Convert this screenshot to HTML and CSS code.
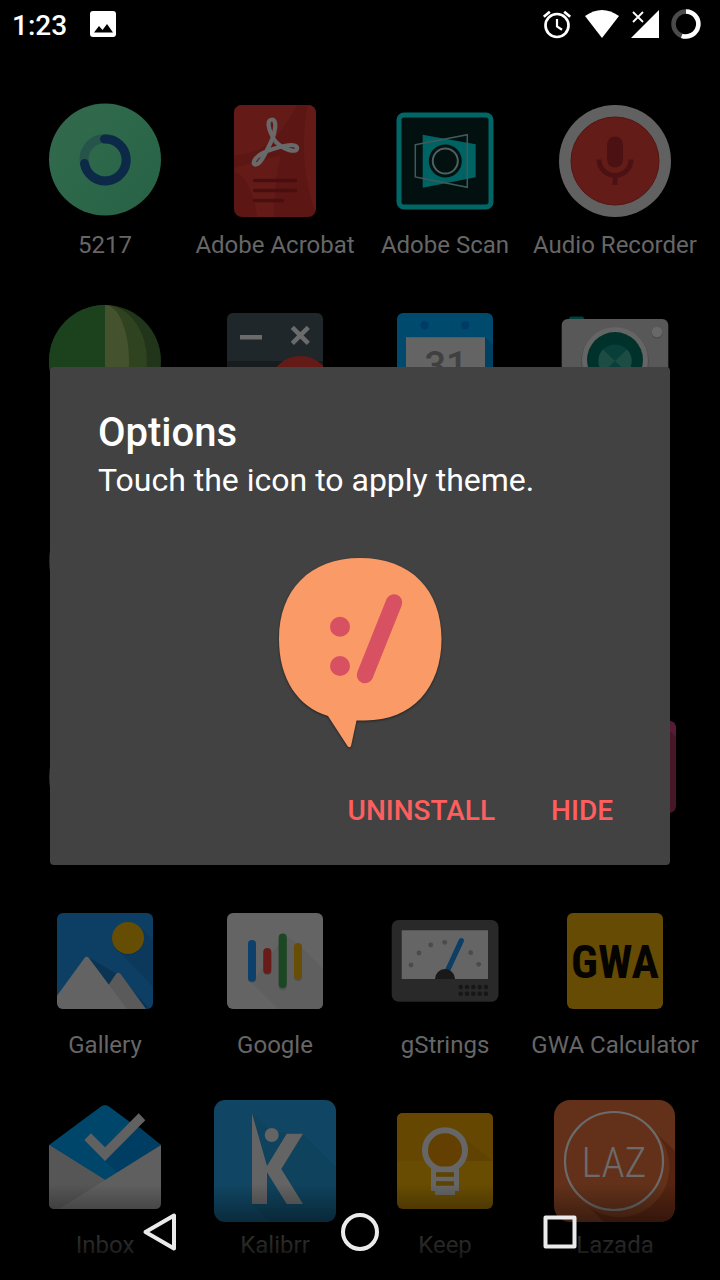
FILE: index.html
```html
<!DOCTYPE html>
<html lang="en">
<head>
<meta charset="utf-8">
<meta name="viewport" content="width=device-width, initial-scale=1">
<title>App drawer</title>
<link rel="stylesheet" href="styles.css">
</head>
<body>
<div class="screen">
  <header class="status">
    <span class="clock">1:23</span>
    <svg class="notice" width="26" height="26" viewBox="0 0 26 26"><rect width="26" height="26" rx="3" fill="#fff"/><path d="M4 21.500l5-6.500 3.500 4 4.500-6 6 8.500z" fill="#000"/></svg>
    <div class="status-icons">
      <svg width="32" height="32" viewBox="0 0 32 32" fill="none" stroke="#fff" stroke-width="2.700"><circle cx="16" cy="17.500" r="11.500"/><path d="M16 11v7.500l5 3.200" stroke-width="2.200"/><path d="M2.800 8.700l6-5M29.200 8.700l-6-5"/></svg>
      <svg width="34" height="30" viewBox="0 0 34 30"><path d="M17 29L0 7Q17-5 34 7z" fill="#fff"/></svg>
      <svg width="28" height="32" viewBox="0 0 28 32"><path d="M28 2v28H0z" fill="#fff"/><path d="M0 1h15v13L7 21 0 16z" fill="#000"/><path d="M2 4l10 10M12 4L2 14" stroke="#fff" stroke-width="1.800"/></svg>
      <svg width="30" height="30" viewBox="0 0 30 30" fill="none" stroke-width="4.500"><circle cx="15" cy="15" r="12.500" stroke="#4a4a4a"/><path d="M15 2.500a12.500 12.500 0 1 1-4.300 24.300" stroke="#fff"/></svg>
    </div>
  </header>

  <main class="apps">
    <div class="app">
      <svg class="icon" viewBox="0 0 128 128"><defs><linearGradient id="mint" x1="0" y1="0" x2="1" y2="1"><stop offset="0" stop-color="#34694c"/><stop offset=".45" stop-color="#2d684b"/><stop offset="1" stop-color="#286145"/></linearGradient></defs><circle cx="64" cy="62.500" r="56" fill="url(#mint)"/><circle cx="64" cy="62.500" r="21" fill="none" stroke="#26544a" stroke-width="9"/><path d="M63.500 42A21 21 0 1 1 43.500 66.500" fill="none" stroke="#0c2a47" stroke-width="9" stroke-linecap="round"/></svg>
      <span class="name">5217</span>
    </div>
    <div class="app">
      <svg class="icon" viewBox="0 0 128 128"><defs><clipPath id="pdf"><rect x="23" y="8" width="82" height="112" rx="8"/></clipPath></defs><g clip-path="url(#pdf)"><path d="M23 8h82v112H23z" fill="#5c1614"/><path d="M23 8h63C80 20 74 28 68 36 57 50 40 58 23 58zM23 74c14 8 20 22 23 46h17c0-20 2-42 7-62L23 71z" fill="#641b18"/><path d="M97 8c-7 32-5 70 6 104h3V8z" fill="#641b18"/></g><path d="M64 44C56 31 56 22.500 61 22.500S65 35 60 45 50 67 45 67.500 42 58 62 52s25-4 24 0-14 1-22-8" fill="none" stroke="#696969" stroke-width="4.200" stroke-linejoin="round"/><path d="M43.500 83.500h41M43.500 93.500h41M43.500 103.500h28" stroke="#470f0e" stroke-width="3.400" stroke-linecap="round"/></svg>
      <span class="name">Adobe Acrobat</span>
    </div>
    <div class="app">
      <svg class="icon" viewBox="0 0 128 128"><rect x="18" y="18" width="92" height="92" rx="5" fill="#021010" stroke="#006666" stroke-width="5"/><path d="M41.700 37.700l53 9.600v33l-53 10.400z" fill="#006363"/><circle cx="64.300" cy="64" r="16.500" fill="#021010"/><circle cx="64.300" cy="64" r="12.500" fill="none" stroke="#4c6261" stroke-width="2"/><path d="M34.300 47.700l52-10v52.600L34.300 80z" fill="none" stroke="#405a59" stroke-width="1.500"/></svg>
      <span class="name">Adobe Scan</span>
    </div>
    <div class="app">
      <svg class="icon" viewBox="0 0 128 128"><circle cx="64" cy="64" r="56" fill="#616161"/><circle cx="64" cy="64" r="44" fill="#641c19" stroke="#541512" stroke-width="1"/><rect x="56" y="39.500" width="16" height="31" rx="8" fill="#4c1112"/><path d="M48 62.500a16 16 0 0 0 32 0M64 78.500V88" fill="none" stroke="#4c1112" stroke-width="5"/></svg>
      <span class="name">Audio Recorder</span>
    </div>

    <div class="app">
      <svg class="icon" viewBox="0 0 128 128"><circle cx="64" cy="64" r="56" fill="#20351a"/><ellipse cx="64" cy="64" rx="42" ry="56" fill="#304320"/><ellipse cx="64" cy="64" rx="24" ry="56" fill="#44532d"/><path d="M64 8a56 56 0 0 0 0 112z" fill="#1b421d"/></svg>
    </div>
    <div class="app">
      <svg class="icon" viewBox="0 0 128 128"><defs><clipPath id="calc"><rect x="16" y="16" width="96" height="96" rx="6"/></clipPath></defs><g clip-path="url(#calc)"><path d="M16 16h96v48H16z" fill="#1f272b"/><path d="M16 64h96v48H16z" fill="#171c1f"/><circle cx="89.300" cy="90" r="31" fill="#641b18"/></g><path d="M29 40.300h22M81.300 30.300l16 16M97.300 30.300l-16 16" stroke="#6b6b6b" stroke-width="4.500"/></svg>
    </div>
    <div class="app">
      <svg class="icon" viewBox="0 0 128 128"><rect x="16" y="16" width="96" height="96" rx="6" fill="#004a6e"/><circle cx="43.700" cy="28.300" r="4" fill="#003a66"/><circle cx="84.300" cy="28.300" r="4" fill="#003a66"/><path d="M104 40l8 8v64h-8z" fill="#004063"/><path d="M25 40.300h79V112H25z" fill="#646464"/><text class="date" x="65" y="82" text-anchor="middle">31</text></svg>
    </div>
    <div class="app">
      <svg class="icon" viewBox="0 0 128 128"><rect x="18" y="19.500" width="15" height="12" rx="2" fill="#01403a"/><rect x="10.700" y="22" width="106.600" height="90" rx="6" fill="#585858"/><circle cx="64" cy="64.500" r="34" fill="#4d4d4d"/><circle cx="64" cy="63" r="33" fill="#656565"/><circle cx="64" cy="63" r="28" fill="#01312b"/><circle cx="64" cy="64" r="16.500" fill="#083f39"/><path d="M64 64L52 52.500a16.500 16.500 0 0 0 0 23zM64 64l12-11.500a16.500 16.500 0 0 1 0 23z" fill="#1d4c45"/><circle cx="106" cy="36" r="5.500" fill="#4b4b4b"/><circle cx="106" cy="35" r="5.300" fill="#686868"/></svg>
    </div>

    <div class="app">
      <svg class="icon" viewBox="0 0 128 128"><circle cx="64" cy="64" r="56" fill="#153a2b"/></svg>
    </div>
    <div class="app"></div>
    <div class="app"></div>
    <div class="app"></div>

    <div class="app">
      <svg class="icon" viewBox="0 0 128 128"><circle cx="64" cy="80" r="56" fill="#1c3f24"/></svg>
    </div>
    <div class="app"></div>
    <div class="app"></div>
    <div class="app">
      <svg class="icon" viewBox="0 0 128 128"><rect x="4" y="24" width="121" height="92" rx="7" fill="#471627"/><path d="M11 24h107q7 0 7 7v9l-10-10z" fill="#571c35"/></svg>
    </div>

    <div class="app">
      <svg class="icon" viewBox="0 0 128 128"><defs><clipPath id="gal"><rect x="16" y="16" width="96" height="96" rx="6"/></clipPath></defs><g clip-path="url(#gal)"><path d="M16 16h96v96H16z" fill="#0d3f65"/><path d="M99 30l13 12v48L76 52z" fill="#0c385b"/><circle cx="87" cy="42" r="16" fill="#0b3353"/><circle cx="87" cy="41" r="16" fill="#664d04"/><path d="M47 60l29 17 33 35H60z" fill="#0b3453"/><path d="M60 99l15-22q2.300-2.500 4.600 0L105 112H70z" fill="#5a5a5a"/><path d="M15 100l28.500-39q2.200-2.500 4.400 0L86 112H15z" fill="#636363"/></g></svg>
      <span class="name">Gallery</span>
    </div>
    <div class="app">
      <svg class="icon" viewBox="0 0 128 128"><rect x="16" y="16" width="96" height="96" rx="6" fill="#646464"/><path d="M41 86l26 26h39q6 0 6-6V72L88 48 74 38z" fill="#5f5f5f"/><g stroke-width="8" stroke-linecap="round"><path d="M41 47.500v34M56.300 56v18M71.700 42v47M87 51v29" stroke="#515151"/><path d="M41 47v33.700" stroke="#0d406b"/><path d="M56.300 55v18" stroke="#681c19"/><path d="M71.700 40.500v46.500" stroke="#1b4823"/><path d="M87 50v28" stroke="#684e04"/></g></svg>
      <span class="name">Google</span>
    </div>
    <div class="app">
      <svg class="icon" viewBox="0 0 128 128"><rect x="10.700" y="23" width="106.800" height="81.700" rx="7" fill="#292929"/><path d="M20.700 33.300H107V82H20.700z" fill="#656565"/><g fill="#4b4b4b"><circle cx="30" cy="68" r="2.400"/><circle cx="38" cy="56" r="2.400"/><circle cx="49.700" cy="48" r="2.400"/><circle cx="63.700" cy="45.300" r="2.400"/><circle cx="89.700" cy="55.700" r="2.400"/><circle cx="97.700" cy="67.300" r="2.400"/></g><path d="M80.300 43.700L64 79" stroke="#0d3f66" stroke-width="5.300" stroke-linecap="round"/><path d="M54 82a10 10 0 0 1 20 0z" fill="#191919"/><g fill="#171717"><circle cx="79.700" cy="90" r="2.300"/><circle cx="86" cy="90" r="2.300"/><circle cx="92.300" cy="90" r="2.300"/><circle cx="98.700" cy="90" r="2.300"/><circle cx="105" cy="90" r="2.300"/><circle cx="79.700" cy="96.700" r="2.300"/><circle cx="86" cy="96.700" r="2.300"/><circle cx="92.300" cy="96.700" r="2.300"/><circle cx="98.700" cy="96.700" r="2.300"/><circle cx="105" cy="96.700" r="2.300"/></g></svg>
      <span class="name">gStrings</span>
    </div>
    <div class="app">
      <svg class="icon" viewBox="0 0 128 128"><rect x="16" y="16" width="96" height="96" rx="6" fill="#664b04"/><text class="gwa" x="64" y="81" text-anchor="middle">GWA</text></svg>
      <span class="name">GWA Calculator</span>
    </div>

    <div class="app">
      <svg class="icon" viewBox="0 0 128 128"><path d="M8 48l52-38.500q4-3 8 0L120 48 64 86z" fill="#00456a"/><path d="M64 64l34-34 22 18-43 28z" fill="#003d62"/><path d="M8 48l56 35 56-35v58q0 6-6 6H14q-6 0-6-6z" fill="#5f5f5f"/><path d="M8 48l56 35-46 29h-4q-6 0-6-6z" fill="#565656"/><path d="M43.300 43l6.700-6.700 14 14 33.700-34 6.600 7L64 64z" fill="#616161"/></svg>
      <span class="name">Inbox</span>
    </div>
    <div class="app">
      <svg class="icon" viewBox="0 0 128 128"><rect x="3" y="3" width="122" height="122" rx="11" fill="#104663"/><path d="M41 16l19 19 32 2 33 33v44q0 11-11 11H59L41 107z" fill="#0f425d"/><path d="M41 16.300L56 69l19.700-32.300H92L70.300 72 92 107H75.700L56 75.300V107H41z" fill="#646464"/><circle cx="60.700" cy="38" r="7" fill="#646464"/></svg>
      <span class="name">Kalibrr</span>
    </div>
    <div class="app">
      <svg class="icon" viewBox="0 0 128 128"><rect x="16" y="16" width="96" height="96" rx="6" fill="#684c02"/><path d="M16 22q0-6 6-6h84q6 0 6 6v42H16z" fill="#664702"/><path d="M82 40l30 24H82z" fill="#604302"/><circle cx="64" cy="53.300" r="20" fill="#643f02" stroke="#666" stroke-width="6"/><path d="M50 69.500h28V94h-4v4H54v-4h-4z" fill="#666"/><path d="M55 75.300h18v4.400H55zM55 84.300h18v4.400H55z" fill="#5e4302"/></svg>
      <span class="name">Keep</span>
    </div>
    <div class="app">
      <svg class="icon" viewBox="0 0 128 128"><rect x="3" y="3" width="121" height="122" rx="16" fill="#63311a"/><path d="M105 36l19 18v55q0 16-16 16H53L37 109A50 50 0 0 0 105 36z" fill="#562411"/><circle cx="63" cy="64" r="49" fill="#63311a" stroke="#6b6b6b" stroke-width="2.200"/><text class="laz" x="63" y="80" text-anchor="middle">LAZ</text></svg>
      <span class="name">Lazada</span>
    </div>
  </main>

  <nav class="nav" aria-label="System">
    <button class="nav-key" aria-label="Back"><svg width="40" height="40" viewBox="0 0 40 40"><path d="M34 3.500v33L5.500 20z"/></svg></button>
    <button class="nav-key" aria-label="Home"><svg width="40" height="40" viewBox="0 0 40 40"><circle cx="20" cy="20" r="17"/></svg></button>
    <button class="nav-key" aria-label="Recent apps"><svg width="40" height="40" viewBox="0 0 40 40"><path d="M5.500 5.500h29v29h-29z"/></svg></button>
  </nav>

  <div class="overlay">
    <section class="dialog" role="dialog" aria-labelledby="dialog-title">
      <h1 class="title" id="dialog-title">Options</h1>
      <p class="message">Touch the icon to apply theme.</p>
      <button class="theme" aria-label="Apply theme">
        <svg width="192" height="208" viewBox="0 0 192 208"><path class="bubble" d="M96 7C147 7 177.500 39 177.500 88S148 169.500 101 169.500H92.500L87 195q-1.500 2.500-3.500 0L64 165C34 156 15 128 15 88 15 39 46 7 96 7z" fill="#fa9a66"/><g fill="#d75162"><circle cx="76" cy="75.700" r="10"/><circle cx="76" cy="115" r="10"/></g><path d="M130 51.500l-29 72.500" stroke="#d75162" stroke-width="16.500" stroke-linecap="round"/></svg>
      </button>
      <div class="actions">
        <button class="action">UNINSTALL</button>
        <button class="action">HIDE</button>
      </div>
    </section>
  </div>
</div>
</body>
</html>
```

FILE: styles.css
```css
* {
  box-sizing: border-box;
}

body {
  margin: 0;
  background: #000;
  font-family: Roboto, "Liberation Sans", sans-serif;
}

button {
  margin: 0;
  padding: 0;
  border: 0;
  background: none;
  font-family: inherit;
  cursor: pointer;
}

svg {
  display: block;
}

.screen {
  position: relative;
  min-height: 100vh;
  overflow: hidden;
}

.status {
  display: flex;
  align-items: center;
  height: 48px;
  padding: 0 19px 0 12px;
  color: #fff;
}

.clock {
  padding-top: 4px;
  font-size: 28px;
  font-weight: 500;
  line-height: 48px;
}

.notice {
  margin-left: 23px;
}

.status-icons {
  display: flex;
  align-items: center;
  gap: 12px;
  margin-left: auto;
}

.apps {
  display: grid;
  grid-template-columns: repeat(4, 1fr);
  grid-auto-rows: 162px;
  row-gap: 38px;
  padding: 49px 20px 20px;
}

.app {
  display: flex;
  flex-direction: column;
  align-items: center;
  gap: 6px;
}

.icon {
  width: 128px;
  height: 128px;
}

.name {
  color: #666;
  font-size: 24px;
  line-height: 28px;
  white-space: nowrap;
}

.date {
  fill: #404040;
  font-size: 38px;
  font-weight: 500;
}

.gwa {
  fill: #050400;
  font-family: "Roboto Condensed", "Liberation Sans Narrow", Roboto, sans-serif;
  font-size: 46px;
  font-weight: 700;
}

.laz {
  fill: #6b6b6b;
  font-family: "Roboto Condensed", Roboto, sans-serif;
  font-size: 42px;
  font-weight: 300;
}

.nav {
  position: absolute;
  right: 0;
  bottom: 0;
  left: 0;
  display: flex;
  justify-content: center;
  gap: 160px;
  padding: 8px 0 28px;
  background: linear-gradient(transparent, #000);
}

.nav-key {
  padding-top: 20px;
}

.nav-key svg {
  fill: none;
  stroke: #ebebeb;
  stroke-width: 4;
  stroke-linejoin: round;
}

.overlay {
  position: absolute;
  inset: 48px 0 96px;
  display: flex;
  align-items: center;
  justify-content: center;
  padding: 0 50px;
}

.dialog {
  display: flex;
  flex-direction: column;
  width: 100%;
  padding: 40px 48px 18px;
  border-radius: 4px;
  background: #424242;
  color: #fff;
}

.title {
  margin: 0;
  font-size: 40px;
  font-weight: 500;
  line-height: 52px;
}

.message {
  margin: 0;
  font-size: 32px;
  line-height: 42px;
}

.theme {
  align-self: center;
  margin-top: 50px;
}

.bubble {
  filter: drop-shadow(0 1px 1px rgba(0, 0, 0, 0.5));
}

.actions {
  display: flex;
  justify-content: flex-end;
  gap: 24px;
  margin-top: 16px;
  margin-right: -7px;
}

.action {
  padding: 0 16px;
  color: #ff5e5e;
  font-size: 28px;
  font-weight: 500;
  line-height: 72px;
}
```
